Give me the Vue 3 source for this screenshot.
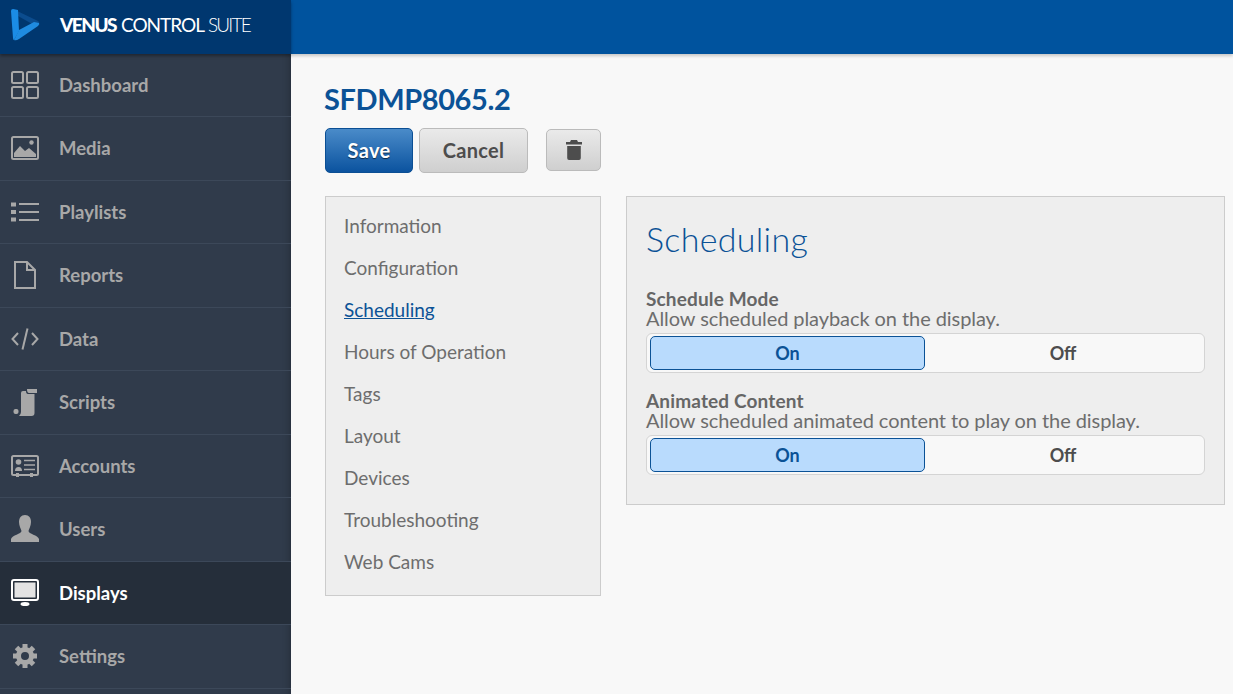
<script setup>
import { ref } from "vue";

const navItems = ref([
  { label: "Dashboard", icon: "dashboard" },
  { label: "Media", icon: "media" },
  { label: "Playlists", icon: "playlists" },
  { label: "Reports", icon: "reports" },
  { label: "Data", icon: "data" },
  { label: "Scripts", icon: "scripts" },
  { label: "Accounts", icon: "accounts" },
  { label: "Users", icon: "users" },
  { label: "Displays", icon: "displays", active: true },
  { label: "Settings", icon: "settings" },
])

const tabs = ref(["Information", "Configuration", "Scheduling", "Hours of Operation", "Tags", "Layout", "Devices", "Troubleshooting", "Web Cams"])

const options = ref([
  { title: "Schedule Mode", help: "Allow scheduled playback on the display." },
  { title: "Animated Content", help: "Allow scheduled animated content to play on the display." },
])
</script>

<template>
  <div class="shell">
    <aside class="sidebar">
      <div class="brand">
        <svg class="logo" width="30" height="33" viewBox="0 0 30 33">
          <path d="M3 1 L28 13 Q30 14 29 16 L24 17 L8 8 Z" fill="#0b4c8e" />
          <path d="M4 32 L9 22 L24 14 L29 15 Q30 16 28 18 L9 31 Q6 33 4 32 Z" fill="#1f8be0" />
          <path d="M1 3 Q1 1 3 1 L8 2 L9 23 L4 32 Q3 32 3 30 Z" fill="#1b8ce6" />
        </svg>
        <span class="brand-name"><b>VENUS</b> <span class="control">CONTROL</span> <span class="suite">SUITE</span></span>
      </div>
      <nav class="nav">
        <a v-for="item in navItems" :key="item.label" class="nav-item" :class="{ active: item.active }">
          <span class="nav-icon">
            <svg v-if="item.icon === 'dashboard'" width="28" height="28" viewBox="0 0 28 28" fill="none" stroke="currentColor" stroke-width="2">
              <rect x="1" y="1" width="11" height="11" rx="1.5" />
              <rect x="16" y="1" width="11" height="11" rx="1.5" />
              <rect x="1" y="16" width="11" height="11" rx="1.5" />
              <rect x="16" y="16" width="11" height="11" rx="1.5" />
            </svg>
            <svg v-else-if="item.icon === 'media'" width="28" height="24" viewBox="0 0 28 24">
              <rect x="1" y="1" width="26" height="22" rx="1.5" fill="none" stroke="currentColor" stroke-width="2" />
              <path d="M3 21 V17 L9 10 L14 15 L18 12 L25 18 V21 Z" fill="currentColor" />
              <circle cx="20.5" cy="6.5" r="2.2" fill="currentColor" />
            </svg>
            <svg v-else-if="item.icon === 'playlists'" width="28" height="20" viewBox="0 0 28 20" fill="currentColor">
              <rect x="0" y="0.5" width="5" height="4" />
              <rect x="0" y="8" width="5" height="4" />
              <rect x="0" y="15.5" width="5" height="4" />
              <rect x="8" y="1" width="20" height="2" />
              <rect x="8" y="9" width="20" height="2" />
              <rect x="8" y="17" width="20" height="2" />
            </svg>
            <svg v-else-if="item.icon === 'reports'" width="22" height="28" viewBox="0 0 22 28" fill="none" stroke="currentColor" stroke-width="2">
              <path d="M1 1 H13 L21 9 V27 H1 Z" />
              <path d="M13 1 V9 H21" />
            </svg>
            <svg v-else-if="item.icon === 'data'" width="28" height="22" viewBox="0 0 28 22" fill="none" stroke="currentColor" stroke-width="2">
              <path d="M7 5 L1.5 11 L7 17" />
              <path d="M21 5 L26.5 11 L21 17" />
              <path d="M16.5 0.5 L11.5 21.5" />
            </svg>
            <svg v-else-if="item.icon === 'scripts'" width="24" height="29" viewBox="0 0 24 29" fill="currentColor">
              <path d="M8 5 Q8 3 10 3 L13 3 Q13 6 15 6 L21.5 6 V25 Q21.5 28 18.5 28 L6 28 Q8 26 8 24 Z" />
              <path d="M14 1 H24 V5 H16 Q14 5 14 1 Z" />
              <rect x="0.5" y="21" width="5" height="5" rx="2" />
            </svg>
            <svg v-else-if="item.icon === 'accounts'" width="28" height="22" viewBox="0 0 28 22">
              <rect x="1" y="1" width="26" height="19" rx="1.5" fill="none" stroke="currentColor" stroke-width="2" />
              <circle cx="7.5" cy="7" r="2.8" fill="currentColor" />
              <path d="M4 16 Q4 12 7.5 12 Q11 12 11 16 Z" fill="currentColor" />
              <path d="M13 5.5 H24 M13 10 H24 M13 14.5 H24" stroke="currentColor" stroke-width="1.6" />
              <rect x="5" y="18" width="3" height="4" fill="currentColor" />
              <rect x="19" y="18" width="3" height="4" fill="currentColor" />
            </svg>
            <svg v-else-if="item.icon === 'users'" width="28" height="28" viewBox="0 0 28 28" fill="currentColor">
              <path d="M14 0 C18 0 20 3 20 7 C20 11 18 14 17.5 16 C17.5 19 27 20 28 24 V27 H0 V24 C1 20 10.5 19 10.5 16 C10 14 8 11 8 7 C8 3 10 0 14 0 Z" />
            </svg>
            <svg v-else-if="item.icon === 'displays'" width="28" height="28" viewBox="0 0 28 28">
              <rect x="1" y="1" width="26" height="20" rx="2" fill="none" stroke="currentColor" stroke-width="2" />
              <rect x="3.5" y="3.5" width="21" height="15" fill="#e3e3e3" />
              <ellipse cx="14" cy="25" rx="4.5" ry="2" fill="currentColor" />
            </svg>
            <svg v-else-if="item.icon === 'settings'" width="24" height="24" viewBox="0 0 24 24" fill="currentColor">
              <circle cx="12" cy="12" r="6.5" fill="none" stroke="currentColor" stroke-width="5" />
              <rect v-for="n in 8" :key="n" x="9.5" y="0" width="5" height="5" :transform="`rotate(${n * 45} 12 12)`" />
            </svg>
          </span>
          <span>{{ item.label }}</span>
        </a>
      </nav>
    </aside>

    <div class="content">
      <header class="topbar"></header>
      <main class="page">
        <h1 class="title">SFDMP8065.2</h1>
        <div class="actions">
          <button class="btn primary">Save</button>
          <button class="btn">Cancel</button>
          <button class="btn trash" aria-label="Delete">
            <svg width="16" height="20" viewBox="0 0 16 20" fill="#4d4d4d">
              <path d="M5 0 H11 L12 2 H16 V4.5 H0 V2 H4 Z" />
              <path d="M1.2 6 H14.8 V18 Q14.8 20 13 20 H3 Q1.2 20 1.2 18 Z" />
            </svg>
          </button>
        </div>
        <div class="columns">
          <ul class="tabs">
            <li v-for="tab in tabs" :key="tab" :class="{ current: tab === 'Scheduling' }">{{ tab }}</li>
          </ul>
          <section class="panel">
            <h2>Scheduling</h2>
            <div v-for="opt in options" :key="opt.title" class="option">
              <div class="opt-title">{{ opt.title }}</div>
              <div class="opt-help">{{ opt.help }}</div>
              <div class="toggle">
                <span class="seg on">On</span>
                <span class="seg">Off</span>
              </div>
            </div>
          </section>
        </div>
      </main>
    </div>
  </div>
</template>

<style>
html, body {
  margin: 0;
  background: #f8f8f8;
}
</style>

<style scoped>
.shell {
  display: flex;
  width: 1233px;
  height: 694px;
  overflow: hidden;
  font-family: "Lato", "Liberation Sans", sans-serif;
  background: #f8f8f8;
}

.sidebar {
  width: 291px;
  flex: none;
  background: #303b4b;
  box-shadow: inset -8px 0 8px -8px rgba(0, 0, 0, 0.3);
}

.brand {
  height: 54px;
  display: flex;
  align-items: center;
  padding-left: 10px;
  background: #00376f;
  box-sizing: border-box;
  box-shadow: 0 2px 3px rgba(0, 0, 0, 0.35);
  position: relative;
}

.logo {
  margin-right: 20px;
  margin-top: -5px;
}

.brand-name {
  color: #fff;
  font-size: 19px;
  margin-top: -5px;
  white-space: nowrap;
}

.brand-name b {
  font-weight: 900;
  letter-spacing: -1.5px;
}

.control {
  letter-spacing: -1px;
}

.suite {
  font-weight: 300;
  letter-spacing: -1.8px;
  margin-left: -1px;
}

.nav {
  margin-top: -0.5px;
}

.nav-item {
  height: 63.5px;
  box-sizing: border-box;
  display: flex;
  align-items: center;
  color: #a8a8a8;
  font-size: 18.5px;
  font-weight: 700;
  border-bottom: 1px solid #3c4859;
}

.nav-item.active {
  background: #252e3a;
  color: #fff;
}

.nav-icon {
  width: 50px;
  display: flex;
  justify-content: center;
  flex: none;
  margin-right: 9px;
}

.content {
  flex: 1;
  min-width: 0;
  display: flex;
  flex-direction: column;
}

.topbar {
  height: 54px;
  flex: none;
  background: #00539e;
  box-shadow: 0 2px 3px rgba(0, 0, 0, 0.2);
}

.page {
  padding: 28px 8px 0 34px;
}

.title {
  margin: 0 0 0 -1px;
  color: #0b5296;
  font-size: 29px;
  font-weight: 700;
  letter-spacing: -0.4px;
  line-height: 34px;
}

.actions {
  display: flex;
  align-items: center;
  margin-top: 12px;
}

.btn {
  height: 45px;
  width: 109px;
  margin-right: 6px;
  padding: 0 0 2px;
  border: 1px solid #bbb;
  border-radius: 5px;
  background: linear-gradient(#eaeaea, #cfcfcf);
  color: #4d4d4d;
  font-family: inherit;
  font-size: 20px;
  font-weight: 700;
  letter-spacing: 0.3px;
}

.btn.primary {
  width: 88px;
  border-color: #0b4f94;
  background: linear-gradient(#4a8bc9, #0b539f);
  color: #fff;
  text-shadow: 0 1px 1px rgba(0, 0, 0, 0.6);
}

.btn.trash {
  width: 55px;
  height: 42px;
  margin: 0 0 1px 12px;
  display: flex;
  align-items: center;
  justify-content: center;
  padding: 0;
}

.columns {
  display: flex;
  align-items: flex-start;
  margin-top: 23px;
}

.tabs {
  list-style: none;
  width: 276px;
  margin: 0;
  padding: 8px 18px 12px;
  box-sizing: border-box;
  height: 400px;
  background: #eee;
  border: 1px solid #ccc;
  color: #6d6d6d;
  font-size: 19px;
}

.tabs li {
  height: 42px;
  line-height: 42px;
}

.tabs li.current {
  color: #0b5296;
  text-decoration: underline;
}

.panel {
  width: 599px;
  height: 309px;
  box-sizing: border-box;
  margin-left: 25px;
  padding: 19px 19px 0;
  background: #eee;
  border: 1px solid #ccc;
}

.panel h2 {
  margin: 0 0 27px;
  color: #0b5296;
  font-size: 34px;
  font-weight: 300;
  letter-spacing: 0.3px;
  line-height: 46px;
}

.option {
  margin-bottom: 18px;
}

.opt-title {
  color: #666;
  font-size: 19px;
  font-weight: 700;
  letter-spacing: 0.15px;
  line-height: 20px;
}

.opt-help {
  color: #6d6d6d;
  font-size: 20px;
  letter-spacing: -0.07px;
  line-height: 18px;
}

.toggle {
  display: flex;
  height: 40px;
  box-sizing: border-box;
  margin-top: 6px;
  padding: 2px 3px;
  background: #f8f8f8;
  border: 1px solid #d4d4d4;
  border-radius: 6px;
}

.seg {
  flex: 1;
  display: flex;
  align-items: center;
  justify-content: center;
  color: #4d4d4d;
  font-size: 18px;
  font-weight: 700;
  border-radius: 5px;
  border: 1px solid transparent;
}

.seg.on {
  flex: none;
  width: 275px;
  box-sizing: border-box;
  background: #b9dbfd;
  border-color: #0b5296;
  color: #0b5296;
}
</style>
